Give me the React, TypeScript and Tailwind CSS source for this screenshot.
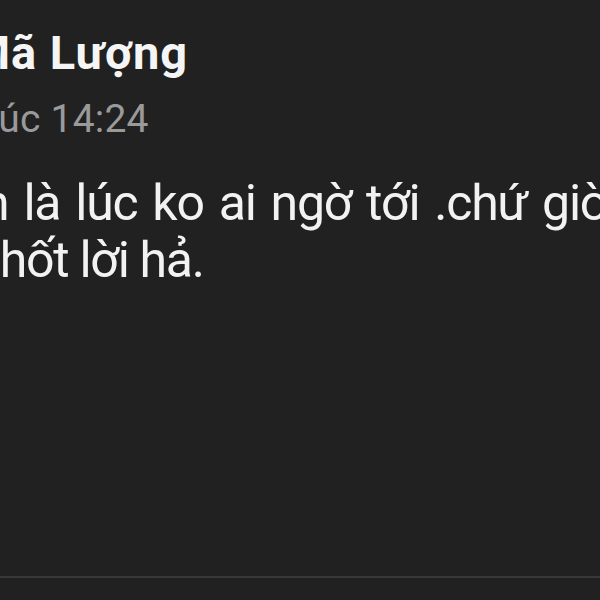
export default function App() {
  return (
    <div className="w-[600px] h-[600px] bg-[#212121] overflow-hidden flex flex-col" style={{ fontFamily: "Roboto, 'Noto Sans', sans-serif" }}>
      <div className="pt-[25px] flex flex-col">
        <div className="ml-[-31px] text-[47px] leading-[56px] font-bold text-[#f5f5f5] whitespace-nowrap tracking-[0.9px]">Mã Lượng</div>
        <div className="mt-[15px] ml-[-22px] text-[39px] leading-[46px] text-[#9a9a9a] whitespace-nowrap tracking-[0.2px]">Lúc 14:24</div>
        <div className="mt-[33px] text-[50px] leading-[57px] text-[#f2f2f2] whitespace-nowrap tracking-[-1.3px]">
          <div className="ml-[-18px] [word-spacing:4px]">n là lúc ko ai ngờ tới .chứ giờ</div>
          <div className="ml-[-25px]">chốt lời hả.</div>
        </div>
      </div>
      <div className="flex-1" />
      <div className="h-[2px] bg-[#383838] mb-[22px]" />
    </div>
  );
}
